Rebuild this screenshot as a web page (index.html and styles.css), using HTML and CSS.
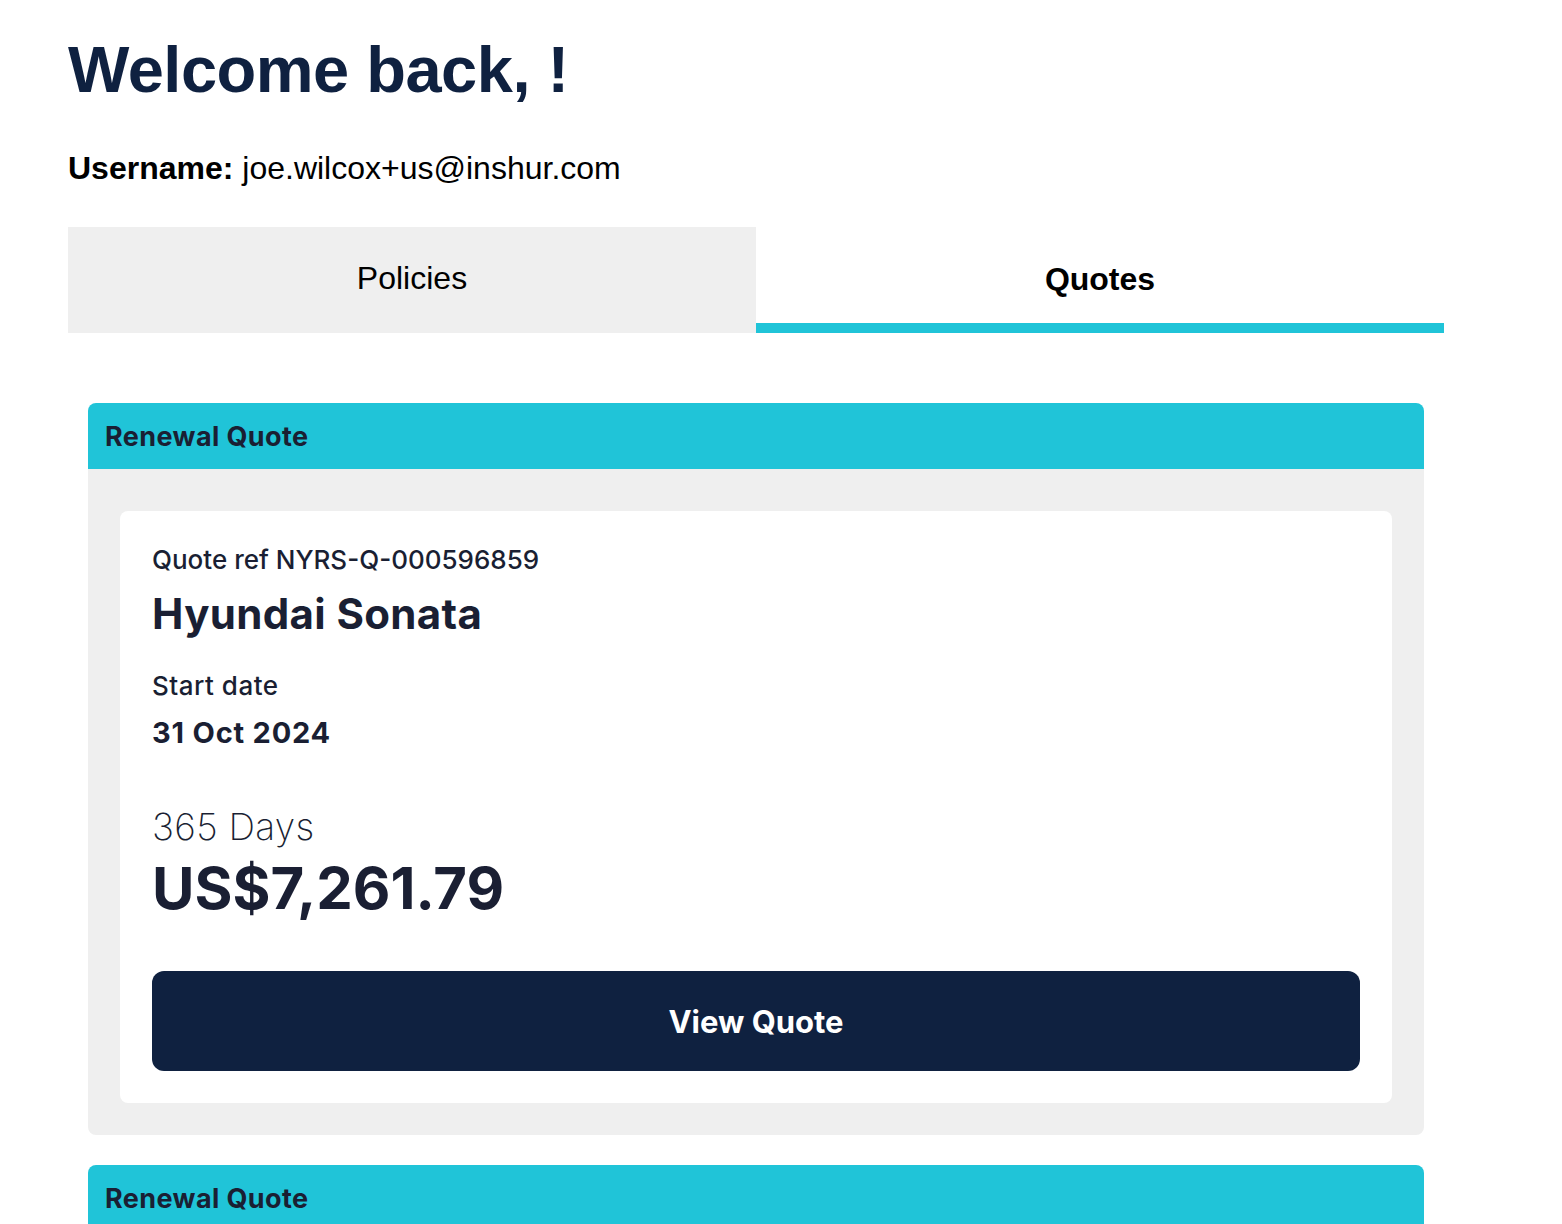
FILE: index.html
```html
<!DOCTYPE html>
<html lang="en">
<head>
<meta charset="utf-8">
<title>Dashboard</title>
<link rel="stylesheet" href="styles.css">
</head>
<body>
<main class="page">
  <h1 class="welcome">Welcome back, !</h1>
  <p class="username"><strong>Username:</strong> joe.wilcox+us@inshur.com</p>

  <nav class="tabs">
    <div class="tab">Policies</div>
    <div class="tab tab-active">Quotes</div>
  </nav>

  <section class="quote-list">
    <article class="quote-group">
      <header class="group-head">Renewal Quote</header>
      <div class="group-body">
        <div class="quote-card">
          <p class="quote-ref">Quote ref NYRS-Q-000596859</p>
          <h2 class="vehicle">Hyundai Sonata</h2>
          <p class="label">Start date</p>
          <p class="date">31 Oct 2024</p>
          <p class="term">365 Days</p>
          <p class="price">US$7,261.79</p>
          <button class="view-btn">View Quote</button>
        </div>
      </div>
    </article>

    <article class="quote-group">
      <header class="group-head">Renewal Quote</header>
      <div class="group-body">
        <div class="quote-card">
          <p class="quote-ref">Quote ref NYRS-Q-000596860</p>
          <h2 class="vehicle">Hyundai Sonata</h2>
        </div>
      </div>
    </article>
  </section>
</main>
</body>
</html>
```

FILE: styles.css
```css
* { box-sizing: border-box; }

body {
  margin: 0;
  background: #ffffff;
  font-family: "Liberation Sans", Arial, Helvetica, sans-serif;
  color: #1a1f33;
}

p, h1, h2 { margin: 0; }

.page {
  width: 1376px;
  margin-left: 68px;
  padding-top: 30px;
}

.welcome {
  font-size: 65px;
  line-height: 80px;
  font-weight: 700;
  color: #0f2140;
  letter-spacing: -0.5px;
}

.username {
  margin-top: 38px;
  font-size: 32px;
  line-height: 40px;
  color: #000000;
}

.tabs {
  display: flex;
  margin-top: 39px;
  height: 106px;
}

.tab {
  flex: 1;
  display: flex;
  align-items: center;
  justify-content: center;
  background: #efefef;
  font-size: 32px;
  color: #000000;
  padding-bottom: 4px;
}

.tab-active {
  background: #ffffff;
  font-weight: 700;
  border-bottom: 10px solid #20c4d8;
  padding: 8px 0 0;
}

.quote-list {
  margin: 70px 20px 0;
  display: flex;
  flex-direction: column;
  gap: 30px;
}

.quote-group {
  border-radius: 8px;
  overflow: hidden;
  font-family: Inter, "Liberation Sans", sans-serif;
}

.group-head {
  background: #20c4d8;
  height: 66px;
  padding: 0 17px;
  display: flex;
  align-items: center;
  font-size: 27px;
  letter-spacing: 0.4px;
  font-weight: 700;
  color: #1a1f33;
}

.group-body {
  background: #efefef;
  padding: 42px 32px 32px;
}

.quote-card {
  background: #ffffff;
  border-radius: 8px;
  padding: 34px 32px 32px;
}

.quote-ref {
  font-size: 26px;
  line-height: 30px;
  font-weight: 500;
}

.vehicle {
  margin-top: 14px;
  font-size: 42px;
  letter-spacing: 0.35px;
  line-height: 50px;
  font-weight: 700;
}

.label {
  margin-top: 32px;
  font-size: 26px;
  letter-spacing: 0.5px;
  line-height: 30px;
  font-weight: 500;
}

.date {
  margin-top: 15px;
  font-size: 29px;
  letter-spacing: 0.8px;
  line-height: 34px;
  font-weight: 700;
}

.term {
  margin-top: 55px;
  font-weight: 200;
  font-size: 37px;
  letter-spacing: 0.3px;
  line-height: 44px;
  color: #1a1f33;
}

.price {
  margin-top: 4px;
  font-size: 58px;
  line-height: 70px;
  font-weight: 700;
  letter-spacing: 0;
}

.view-btn {
  display: block;
  width: 100%;
  height: 100px;
  margin-top: 48px;
  border: 0;
  border-radius: 12px;
  background: #0f2140;
  color: #ffffff;
  font-family: inherit;
  font-size: 31px;
  font-weight: 700;
}
```
